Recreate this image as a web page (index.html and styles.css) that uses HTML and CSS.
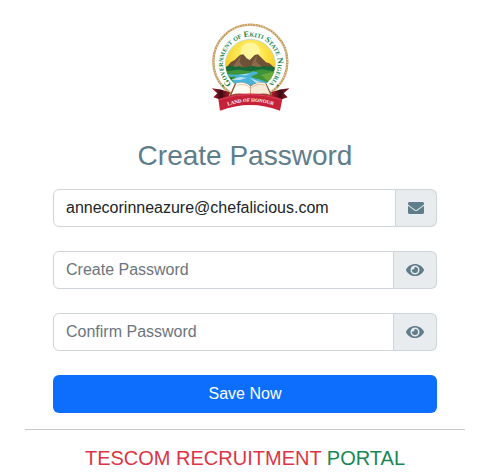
FILE: index.html
```html
<!DOCTYPE html>
<html lang="en">
<head>
    <meta charset="UTF-8">
    <meta name="viewport" content="width=device-width, initial-scale=1.0">
    <title>Create Password</title>
    <link rel="stylesheet" href="styles.css">
</head>
<body>
    <main class="card">
        <svg class="logo" viewBox="3 20 264 270" role="img" aria-label="Government of Ekiti State Nigeria">
            <defs>
                <clipPath id="scene"><circle cx="151" cy="147" r="74"/></clipPath>
                <radialGradient id="sun" cx="50%" cy="32%" r="60%">
                    <stop offset="0" stop-color="#fff7a0"/>
                    <stop offset="0.35" stop-color="#ffeb5c"/>
                    <stop offset="1" stop-color="#f5c81c"/>
                </radialGradient>
                <linearGradient id="tail" x1="0" x2="1">
                    <stop offset="0" stop-color="#c01f35"/>
                    <stop offset="0.5" stop-color="#3a0c12"/>
                    <stop offset="1" stop-color="#a81b2e"/>
                </linearGradient>
                <path id="ring" d="M92 203 A82 82 0 1 1 210 203"/>
                <path id="motto" d="M75 275 Q151 244 229 273"/>
            </defs>
            <!-- rope border -->
            <circle cx="151" cy="139" r="111" fill="#fff" stroke="#c59a62" stroke-width="7"/>
            <circle cx="151" cy="139" r="111" fill="none" stroke="#ecd3a6" stroke-width="5" stroke-dasharray="3 5"/>
            <text class="logo-name"><textPath href="#ring" startOffset="50%">Government of Ekiti State Nigeria</textPath></text>
            <circle cx="69" cy="211" r="3" fill="#17834c"/>
            <circle cx="233" cy="211" r="3" fill="#17834c"/>
            <!-- sun, hills and river -->
            <g clip-path="url(#scene)">
                <rect x="75" y="70" width="152" height="152" fill="url(#sun)"/>
                <circle cx="151" cy="110" r="29" fill="#fff59a"/>
                <path d="M78 158 L92 141 L104 134 L120 119 L130 117 L140 129 L149 134 L164 119 L174 117 L185 128 L198 141 L208 144 L226 159 V170 H76Z" fill="#6f5138"/>
                <path d="M97 156 L123 120 L119 139 L130 156Z M151 156 L170 119 L169 139 L188 156Z" fill="#8b6b49"/>
                <path d="M76 155 Q92 147 105 155 L120 153 L134 157 L154 151 L174 155 L196 152 L227 156 V222 H76Z" fill="#166a38"/>
                <path d="M76 168 L116 163 L151 168 L186 162 L227 168 V222 H76Z" fill="#3f9439"/>
                <path d="M158 168 Q185 172 163 179 Q139 184 177 192 L213 205 V222 H91 L87 202 Q111 189 105 183 L80 185 V176 Q105 181 132 176 Q155 173 158 168Z" fill="#49b3da"/>
                <path d="M91 193 L121 185 L141 188 L119 194Z M150 188 L175 198 L197 204 L169 204Z M116 179 L151 174 L137 180Z" fill="#b8e3ee"/>
                <path d="M183 178 L227 168 V207 L207 200Z" fill="#6bab3a"/>
                <path d="M76 186 L98 188 L89 200 L80 198Z" fill="#176831"/>
            </g>
            <circle cx="151" cy="147" r="75" fill="none" stroke="#5a9c50" stroke-width="1"/>
            <!-- open book -->
            <path d="M87 244 L104 206 Q131 195 151 211 Q175 195 200 206 L218 244 Q177 230 153 248 Q125 230 87 244Z" fill="#8c4a2c"/>
            <path d="M94 238 L109 204 Q134 197 151 213 V246 Q129 228 94 238Z" fill="#fffaf0"/>
            <path d="M152 213 Q173 197 196 204 L211 238 Q180 228 152 246Z" fill="#f7ead6"/>
            <path d="M151 214 V244 M112 209 Q137 203 150 218 M193 209 Q169 203 153 218" fill="none" stroke="#d0b08a" stroke-width="2"/>
            <!-- ribbon -->
            <path d="M35 219 Q62 220 90 231 L84 256 L58 252 L40 246 L52 234Z" fill="url(#tail)"/>
            <path d="M268 219 Q241 220 213 231 L219 256 L245 252 L263 246 L251 234Z" fill="url(#tail)"/>
            <path d="M55 251 Q151 218 247 251 L240 286 Q151 252 60 286Z" fill="#c5223a"/>
            <path d="M58 253 Q151 222 244 253" fill="none" stroke="#df5260" stroke-width="2"/>
            <text class="logo-motto"><textPath href="#motto" startOffset="50%">LAND OF HONOUR</textPath></text>
        </svg>

        <h1 class="title">Create Password</h1>

        <form class="password-form">
            <div class="input-group">
                <input type="email" id="email" aria-label="Email" value="annecorinneazure@chefalicious.com">
                <label class="addon" for="email">
                    <svg class="icon" viewBox="0 0 512 512" aria-hidden="true"><path d="M502.3 190.8c3.900-3.100 9.700-.2 9.700 4.700V400c0 26.500-21.500 48-48 48H48c-26.500 0-48-21.500-48-48V195.600c0-5 5.700-7.800 9.700-4.700 22.400 17.400 52.100 39.500 154.100 113.600 21.100 15.400 56.700 47.800 92.200 47.600 35.700.3 72-32.800 92.300-47.600 102-74.100 131.600-96.300 154-113.700zM256 320c23.200.4 56.600-29.200 73.400-41.400 132.700-96.300 142.800-104.700 173.400-128.700 5.800-4.500 9.200-11.500 9.200-18.900v-19c0-26.500-21.500-48-48-48H48c-26.500 0-48 21.500-48 48v19c0 7.400 3.400 14.300 9.200 18.900 30.600 23.900 40.700 32.400 173.400 128.700 16.800 12.200 50.200 41.800 73.400 41.400z"/></svg>
                </label>
            </div>
            <div class="input-group">
                <input type="password" id="password" aria-label="Create Password" placeholder="Create Password">
                <button type="button" class="addon" aria-label="Show password">
                    <svg class="icon icon-eye" viewBox="0 0 576 512" aria-hidden="true"><path d="M572.520 241.400C518.290 135.590 410.930 64 288 64S57.680 135.640 3.480 241.410a32.350 32.350 0 0 0 0 29.190C57.710 376.410 165.070 448 288 448s230.320-71.640 284.520-177.410a32.350 32.350 0 0 0 0-29.190zM288 400a144 144 0 1 1 144-144 143.930 143.930 0 0 1-144 144zm0-240a95.310 95.310 0 0 0-25.310 3.790 47.850 47.850 0 0 1-66.900 66.900A95.780 95.780 0 1 0 288 160z"/></svg>
                </button>
            </div>
            <div class="input-group">
                <input type="password" id="confirm-password" aria-label="Confirm Password" placeholder="Confirm Password">
                <button type="button" class="addon" aria-label="Show confirmed password">
                    <svg class="icon icon-eye" viewBox="0 0 576 512" aria-hidden="true"><path d="M572.520 241.400C518.290 135.590 410.930 64 288 64S57.680 135.640 3.480 241.410a32.350 32.350 0 0 0 0 29.190C57.710 376.410 165.070 448 288 448s230.320-71.640 284.520-177.410a32.350 32.350 0 0 0 0-29.190zM288 400a144 144 0 1 1 144-144 143.930 143.930 0 0 1-144 144zm0-240a95.310 95.310 0 0 0-25.310 3.790 47.850 47.850 0 0 1-66.900 66.900A95.780 95.780 0 1 0 288 160z"/></svg>
                </button>
            </div>
            <button type="submit" class="btn-save">Save Now</button>
        </form>

        <footer class="footer">
            <span class="red">TESCOM RECRUITMENT</span> <span class="green">PORTAL</span>
        </footer>
    </main>
</body>
</html>
```
FILE: styles.css
```css
* {
    box-sizing: border-box;
}

body {
    margin: 0;
    padding: 22px 34px 0 25px;
    background-color: #fff;
    color: #212529;
    font-family: "Liberation Sans", Arial, sans-serif;
    font-size: 16px;
    line-height: 24px;
}

.card {
    max-width: 440px;
    margin: 0 auto;
    text-align: center;
}

.logo {
    display: block;
    width: 88px;
    height: 90px;
    margin: 0 auto;
}

.logo-name {
    font-family: "Liberation Serif", serif;
    font-size: 25px;
    font-weight: bold;
    font-variant: small-caps;
    fill: #17834c;
    text-anchor: middle;
}

.logo-motto {
    font-family: "Liberation Serif", serif;
    font-size: 15px;
    font-weight: bold;
    fill: #fff;
    text-anchor: middle;
}

.title {
    margin: 27px 0 16px;
    color: #607d8b;
    font-size: 28px;
    font-weight: normal;
    line-height: 34px;
}

.password-form {
    display: flex;
    flex-direction: column;
    gap: 24px;
    padding: 0 28px 16px;
}

.input-group {
    display: flex;
    height: 38px;
}

.input-group input {
    flex: 1;
    min-width: 0;
    padding: 6px 12px;
    border: 1px solid #ced4da;
    border-radius: 6px 0 0 6px;
    background-color: #fff;
    color: #212529;
    font: inherit;
}

.input-group input::placeholder {
    color: #6c757d;
    opacity: 1;
}

.addon {
    display: flex;
    align-items: center;
    padding: 0 12px;
    border: 1px solid #ced4da;
    border-left: 0;
    border-radius: 0 6px 6px 0;
    background-color: #e9ecef;
    color: #607d8b;
}

.icon {
    width: 16px;
    height: 16px;
    fill: currentColor;
}

.icon-eye {
    width: 18px;
}

.btn-save {
    height: 38px;
    border: 0;
    border-radius: 6px;
    background-color: #0d6efd;
    color: #fff;
    font: inherit;
    cursor: pointer;
}

.footer {
    padding-top: 16px;
    border-top: 1px solid #c8c9ca;
    font-size: 20px;
}

.red {
    color: #dc3545;
}

.green {
    color: #198754;
}
```
